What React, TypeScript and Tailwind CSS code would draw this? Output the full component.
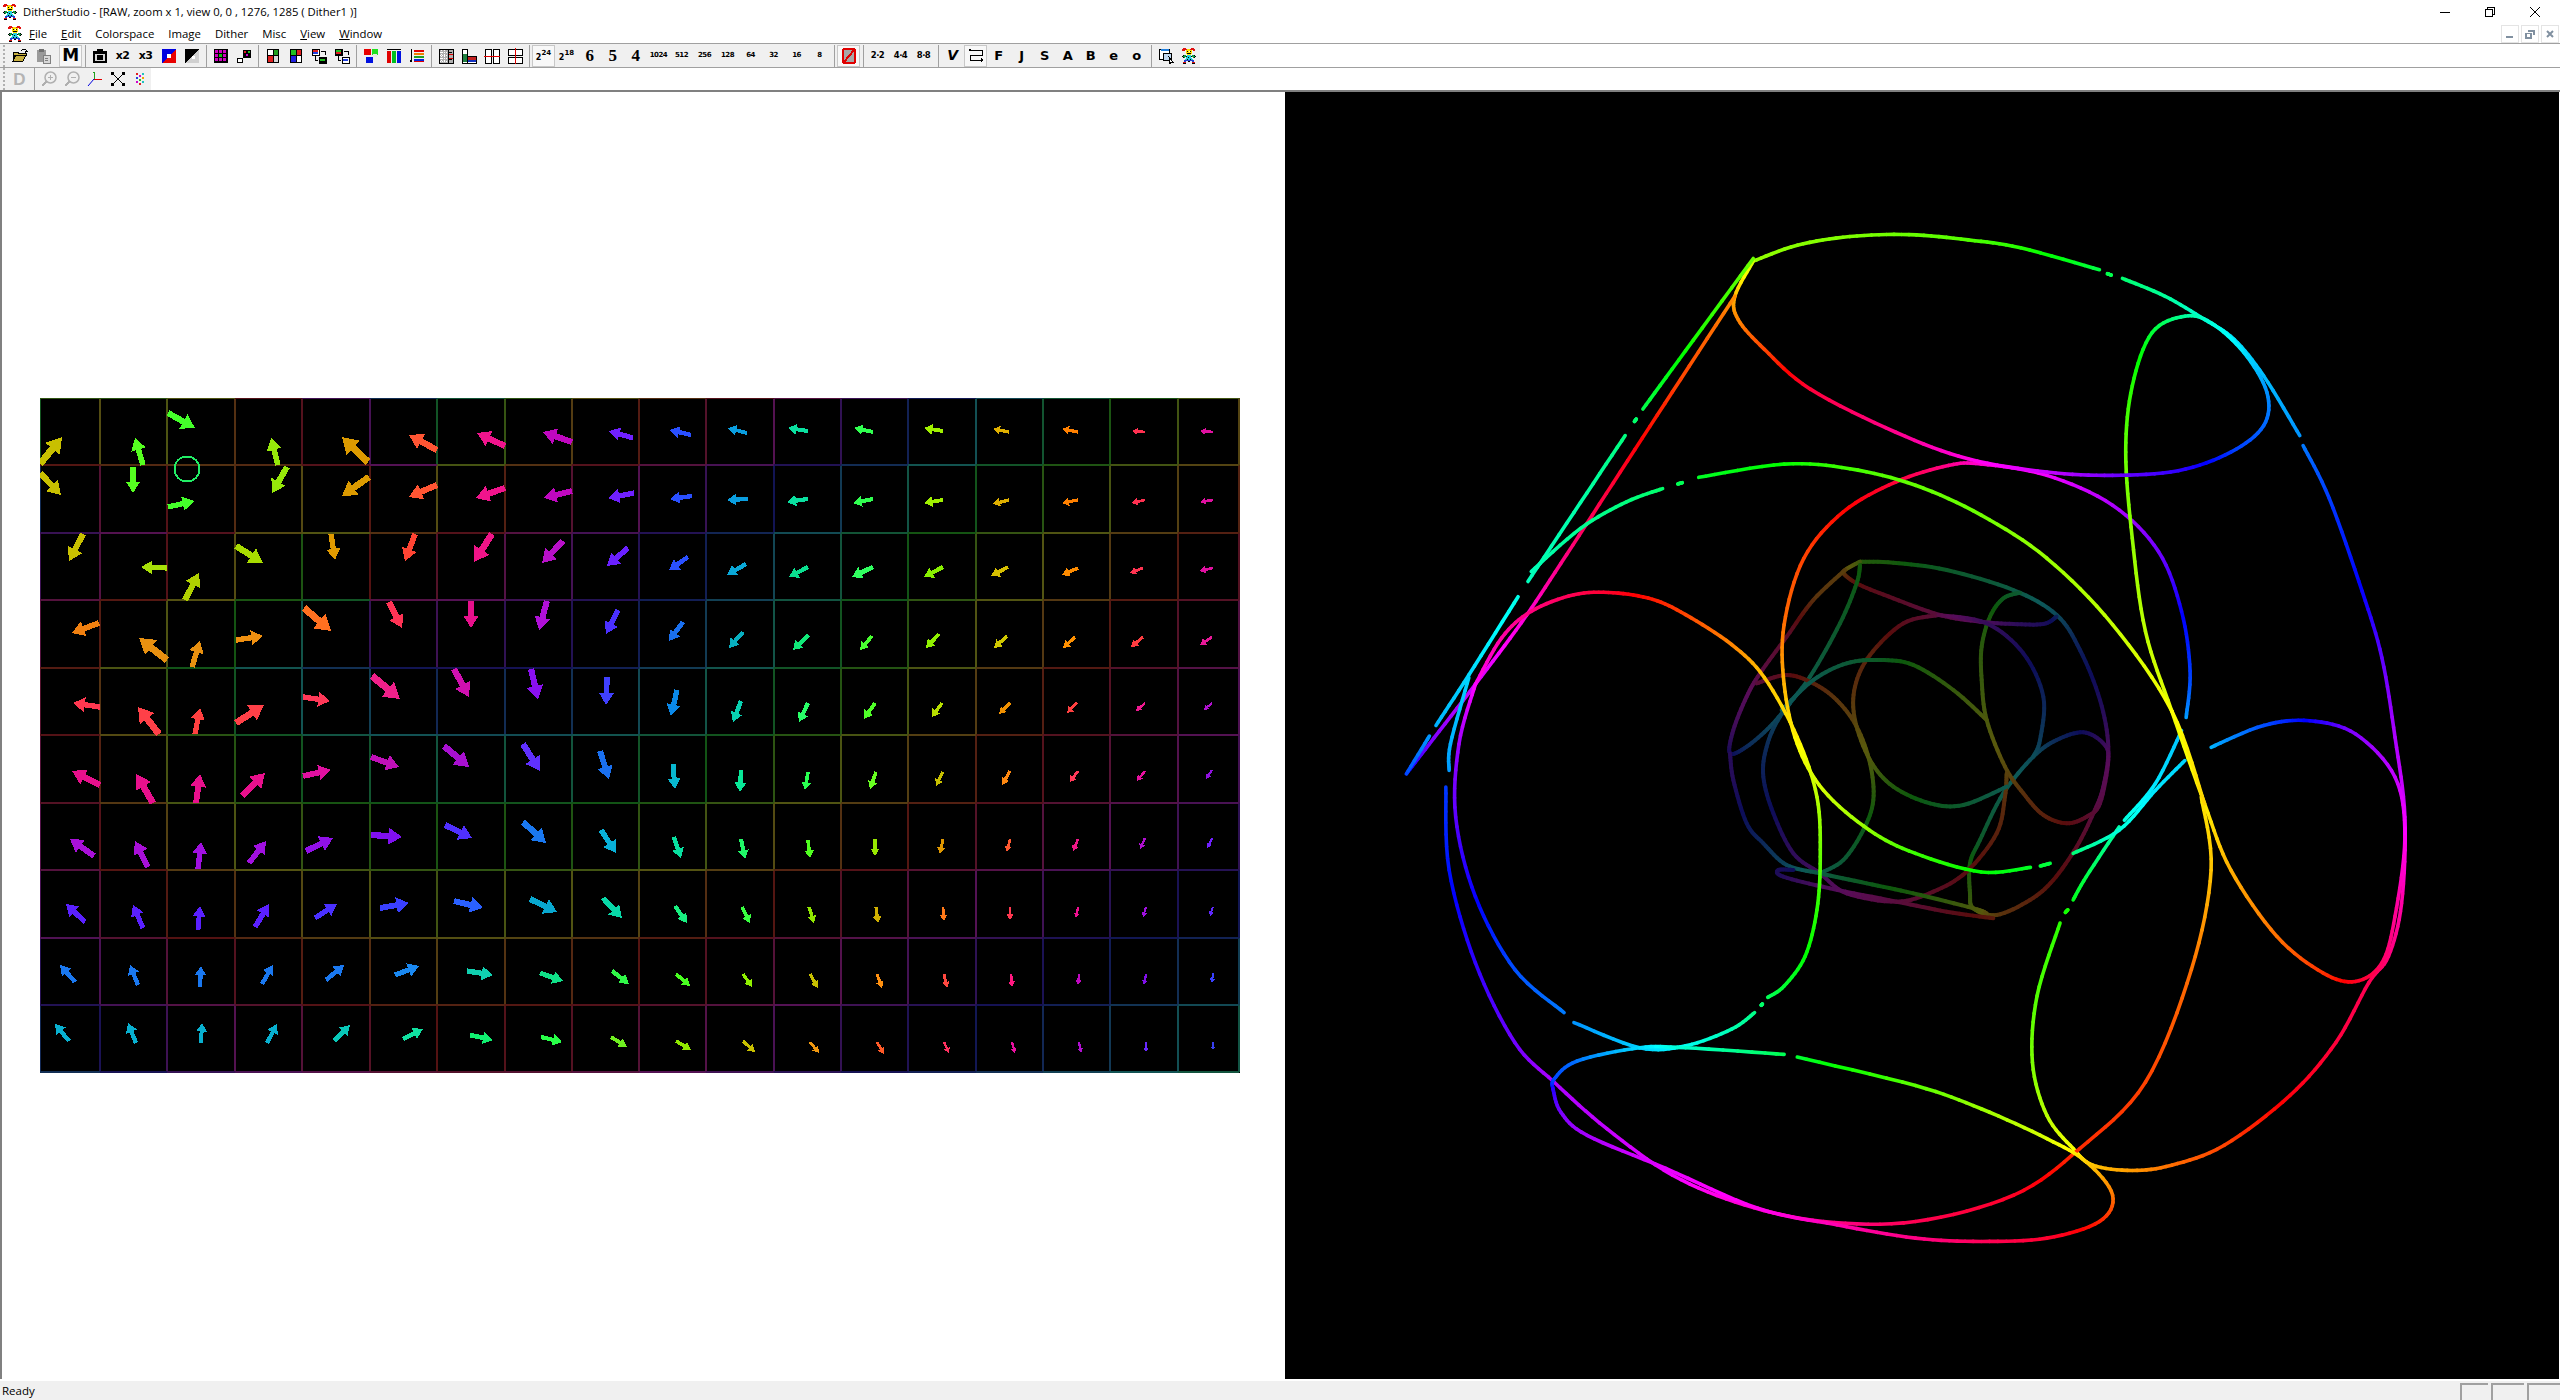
import React from 'react';

type Arrow = [number, number, number, number, string];
type Pt = [number, number, number];

const UI_FONT = { fontFamily: '"Open Sans", "Noto Sans", sans-serif' };

// ---------- arrow field ----------
const ARROWS: Arrow[] = [
  [40, 464, 62, 437, '#c8c000'], [143, 465, 135, 438, '#55ff20'], [168, 413, 195, 428, '#44ff2a'], [278, 465, 271, 438, '#96e80a'], [368, 462, 342, 437, '#dc9a00'], [437, 450, 409, 435, '#ff5533'],
  [505, 446, 477, 433, '#f0148c'], [572, 442, 543, 432, '#c008c0'], [633, 438, 609, 431, '#7020ff'], [691, 435, 670, 430, '#2a50ff'], [747, 433, 728, 428, '#0a9ee0'], [808, 431, 788, 428, '#0ae0a0'],
  [873, 432, 854, 428, '#30ff50'], [943, 431, 924, 428, '#a0f000'], [1009, 432, 993, 429, '#e0b000'], [1078, 432, 1062, 429, '#ff8000'], [1145, 432, 1132, 431, '#ff3050'], [1213, 432, 1200, 431, '#e010a0'],

  [40, 473, 61, 495, '#c8c000'], [133, 467, 133, 493, '#55ff20'], [168, 507, 194, 501, '#44ff2a'], [287, 467, 272, 493, '#96e80a'], [369, 477, 342, 496, '#dc9a00'], [437, 485, 409, 497, '#ff5533'],
  [505, 488, 476, 498, '#f0148c'], [572, 491, 544, 498, '#c008c0'], [634, 493, 608, 498, '#7020ff'], [692, 496, 670, 499, '#2a50ff'], [748, 499, 727, 500, '#0a9ee0'], [808, 499, 787, 502, '#0ae0a0'],
  [873, 499, 853, 503, '#30ff50'], [943, 500, 924, 503, '#a0f000'], [1009, 500, 993, 504, '#e0b000'], [1078, 500, 1062, 503, '#ff8000'], [1145, 500, 1132, 503, '#ff3050'], [1213, 500, 1200, 502, '#e010a0'],

  [83, 534, 69, 561, '#c8c000'], [167, 568, 141, 567, '#a8e008'], [185, 600, 199, 573, '#b0d000'], [236, 546, 263, 563, '#a8dc00'], [331, 534, 335, 560, '#e09a00'], [415, 534, 405, 561, '#ff4433'],
  [492, 534, 474, 562, '#f01488'], [563, 541, 542, 563, '#b810c8'], [628, 548, 607, 566, '#6a20ff'], [688, 557, 669, 570, '#2a50ff'], [746, 564, 727, 575, '#0aa8d8'], [808, 567, 789, 577, '#0ae090'],
  [873, 567, 852, 577, '#30ff60'], [943, 567, 924, 577, '#88f000'], [1008, 567, 991, 576, '#d8c000'], [1078, 568, 1062, 575, '#ff8c00'], [1143, 568, 1130, 573, '#ff3350'], [1213, 568, 1200, 571, '#e010a0'],

  [99, 623, 72, 633, '#f08010'], [167, 660, 139, 638, '#e89010'], [192, 667, 200, 641, '#e89010'], [236, 640, 263, 636, '#f09010'], [304, 608, 331, 631, '#ff7020'], [389, 602, 402, 628, '#ff3355'],
  [471, 601, 471, 628, '#e8108c'], [547, 601, 539, 630, '#b010d8'], [618, 610, 606, 634, '#4a30ff'], [683, 622, 669, 641, '#1a70f0'], [743, 632, 729, 648, '#08b0c0'], [808, 635, 793, 650, '#10e878'],
  [872, 636, 860, 650, '#48ff30'], [939, 634, 926, 648, '#90f000'], [1007, 636, 994, 648, '#d0c800'], [1075, 637, 1063, 648, '#ff9000'], [1143, 637, 1131, 647, '#ff3c40'], [1212, 637, 1200, 645, '#e81898'],

  [100, 707, 73, 703, '#ff3850'], [159, 734, 138, 707, '#ff4048'], [195, 734, 200, 708, '#ff4040'], [236, 723, 264, 705, '#ff4048'], [303, 697, 330, 701, '#ff3858'], [372, 676, 400, 699, '#f0208a'],
  [454, 669, 469, 697, '#d010b0'], [531, 669, 538, 699, '#8a10f0'], [607, 677, 606, 705, '#4040ff'], [677, 690, 671, 716, '#0a88e8'], [741, 701, 733, 722, '#08d0b0'], [808, 703, 799, 722, '#28ff68'],
  [875, 703, 864, 719, '#50ff28'], [942, 703, 932, 717, '#b8e000'], [1010, 703, 999, 714, '#f09000'], [1077, 703, 1067, 713, '#ff4040'], [1145, 703, 1136, 711, '#f01890'], [1212, 703, 1204, 710, '#b010d0'],

  [100, 785, 72, 771, '#e8108c'], [153, 803, 136, 774, '#e8108c'], [196, 803, 200, 774, '#e8108c'], [242, 796, 265, 773, '#e8108c'], [303, 776, 331, 770, '#e010a0'], [371, 757, 399, 767, '#c010b8'],
  [444, 746, 469, 767, '#a810d0'], [523, 744, 540, 771, '#6030ff'], [600, 751, 609, 779, '#1a70f0'], [673, 764, 675, 789, '#08b8d0'], [741, 770, 740, 792, '#08e898'], [808, 772, 805, 790, '#28ff50'],
  [876, 772, 870, 789, '#68ff20'], [943, 772, 936, 786, '#c8c000'], [1010, 771, 1002, 785, '#ff8810'], [1078, 771, 1070, 782, '#ff3858'], [1145, 771, 1137, 781, '#e810a0'], [1212, 770, 1206, 779, '#9010e0'],

  [94, 856, 70, 839, '#a810d8'], [148, 867, 135, 841, '#a810d8'], [198, 869, 201, 842, '#a010e0'], [249, 863, 266, 841, '#a010e0'], [306, 851, 333, 838, '#9010e8'], [371, 835, 402, 837, '#8010f0'],
  [445, 825, 472, 838, '#5030ff'], [523, 822, 546, 843, '#1a78f0'], [601, 830, 616, 853, '#08b0d8'], [674, 837, 681, 858, '#08e0a0'], [741, 839, 745, 859, '#20f868'], [808, 840, 810, 858, '#50ff20'],
  [875, 839, 875, 856, '#98e800'], [943, 839, 940, 854, '#e09800'], [1010, 839, 1007, 852, '#ff5830'], [1078, 839, 1073, 851, '#f01888'], [1145, 838, 1140, 849, '#b010d0'], [1212, 838, 1207, 848, '#7020ff'],

  [85, 922, 66, 904, '#5a20ff'], [143, 928, 133, 905, '#5a20ff'], [198, 930, 200, 906, '#5a20ff'], [255, 927, 269, 904, '#5a20ff'], [315, 918, 337, 904, '#4a30ff'], [380, 908, 409, 903, '#3a40ff'],
  [454, 901, 483, 908, '#2a60ff'], [530, 899, 557, 912, '#08a8d0'], [603, 898, 622, 918, '#08d8a8'], [675, 906, 687, 923, '#18f080'], [742, 907, 750, 923, '#38ff40'], [809, 907, 814, 923, '#90e800'],
  [876, 907, 878, 923, '#d0b000'], [943, 907, 944, 921, '#ff7818'], [1010, 907, 1010, 920, '#ff3850'], [1078, 907, 1076, 918, '#f01090'], [1146, 907, 1143, 917, '#a010e0'], [1213, 907, 1210, 916, '#6028ff'],

  [75, 982, 60, 965, '#1a78f0'], [138, 985, 130, 965, '#1a78f0'], [200, 987, 201, 966, '#1a78f0'], [262, 984, 273, 965, '#1a78f0'], [326, 980, 344, 965, '#1a78f0'], [395, 975, 419, 966, '#1a88f0'],
  [467, 971, 493, 975, '#10d0b0'], [540, 973, 563, 981, '#10e088'], [612, 971, 629, 984, '#30f848'], [676, 974, 690, 986, '#48ff20'], [743, 974, 752, 987, '#90f000'], [810, 974, 818, 988, '#c8c000'],
  [877, 974, 882, 988, '#ff9010'], [944, 974, 947, 988, '#ff4840'], [1011, 974, 1012, 987, '#ff1880'], [1079, 974, 1078, 985, '#c008c0'], [1146, 974, 1144, 985, '#8010e8'], [1213, 973, 1212, 983, '#3840ff'],

  [69, 1041, 55, 1024, '#08b0d0'], [136, 1043, 128, 1023, '#08b0d0'], [201, 1043, 202, 1023, '#08b0d0'], [267, 1043, 277, 1024, '#08b0d0'], [334, 1041, 350, 1025, '#08c8b8'], [403, 1039, 423, 1029, '#10e0a0'],
  [470, 1035, 493, 1040, '#10f070'], [541, 1037, 562, 1042, '#28ff48'], [611, 1037, 627, 1047, '#70f020'], [676, 1041, 691, 1050, '#90e800'], [743, 1041, 755, 1052, '#c8c000'], [810, 1042, 819, 1053, '#f09810'],
  [877, 1042, 884, 1054, '#ff5a28'], [944, 1042, 949, 1053, '#ff3060'], [1012, 1042, 1015, 1053, '#e810a0'], [1079, 1042, 1081, 1053, '#b010d0'], [1146, 1042, 1146, 1052, '#6828ff'], [1213, 1042, 1213, 1050, '#3840f0'],
];

const GRID_XS = [40, 100, 167, 235, 302, 370, 437, 505, 572, 639, 706, 774, 841, 908, 976, 1043, 1110, 1178, 1239];
const GRID_YS = [398, 465, 533, 600, 668, 735, 803, 870, 938, 1005, 1072];

// rough hue of the grid lines, sampled on a coarse lattice
const HUE_XS = [40, 167, 302, 437, 572, 707, 842, 977, 1113, 1240];
const HUE_YS = [398, 533, 668, 803, 938, 1005, 1073];
const HUES = [
  [90, 100, 320, 180, 70, 10, 300, 210, 130, 60],
  [260, 320, 80, 10, 300, 240, 170, 100, 50, 0],
  [340, 100, 200, 250, 240, 190, 120, 50, 350, 300],
  [320, 60, 110, 130, 130, 100, 50, 0, 320, 280],
  [280, 350, 30, 60, 40, 0, 320, 280, 240, 220],
  [240, 300, 350, 20, 0, 330, 290, 250, 220, 180],
  [200, 260, 300, 340, 330, 290, 250, 220, 190, 150],
];

function lerpHue(a: number, b: number, t: number) {
  const d = ((b - a + 540) % 360) - 180;
  return (a + d * t + 360) % 360;
}

function slot(list: number[], v: number) {
  let i = 0;
  while (i < list.length - 2 && v > list[i + 1]) i++;
  return [i, Math.min(1, Math.max(0, (v - list[i]) / (list[i + 1] - list[i])))];
}

function gridHue(x: number, y: number) {
  const [i, tx] = slot(HUE_XS, x);
  const [j, ty] = slot(HUE_YS, y);
  return lerpHue(lerpHue(HUES[j][i], HUES[j][i + 1], tx), lerpHue(HUES[j + 1][i], HUES[j + 1][i + 1], tx), ty);
}

function arrowPoints([x1, y1, x2, y2]: Arrow) {
  const dx = x2 - x1;
  const dy = y2 - y1;
  const len = Math.hypot(dx, dy);
  const ux = dx / len;
  const uy = dy / len;
  const head = len * 0.43;
  const hw = len * 0.27;
  const sw = Math.max(0.7, len * 0.1);
  const nx = x2 - ux * head;
  const ny = y2 - uy * head;
  const p = (x: number, y: number, w: number) => `${(x - uy * w).toFixed(1)},${(y + ux * w).toFixed(1)}`;
  return [p(x1, y1, sw), p(nx, ny, sw), p(nx, ny, hw), p(x2, y2, 0), p(nx, ny, -hw), p(nx, ny, -sw), p(x1, y1, -sw)].join(' ');
}

function ArrowField() {
  const lines: React.ReactNode[] = [];
  GRID_XS.forEach((x, i) => {
    for (let j = 0; j < GRID_YS.length - 1; j++) {
      const h = gridHue(x, (GRID_YS[j] + GRID_YS[j + 1]) / 2);
      lines.push(<line key={`v${i}-${j}`} x1={x} x2={x} y1={GRID_YS[j]} y2={GRID_YS[j + 1]} stroke={`hsl(${h} 65% 20%)`} strokeWidth={2} />);
    }
  });
  GRID_YS.forEach((y, j) => {
    for (let i = 0; i < GRID_XS.length - 1; i++) {
      const h = gridHue((GRID_XS[i] + GRID_XS[i + 1]) / 2, y);
      lines.push(<line key={`h${i}-${j}`} x1={GRID_XS[i]} x2={GRID_XS[i + 1]} y1={y} y2={y} stroke={`hsl(${h} 65% 20%)`} strokeWidth={2} />);
    }
  });
  return (
    <svg width={1200} height={675} viewBox="40 398 1200 675" shapeRendering="crispEdges" className="block bg-black">
      {lines}
      {ARROWS.map((a, i) => (
        <polygon key={i} points={arrowPoints(a)} fill={a[4]} />
      ))}
      <circle cx={187} cy={469} r={12.5} fill="none" stroke="#22ee66" strokeWidth={2} />
    </svg>
  );
}

// ---------- curve ----------
const OUTER: Pt[][] = [
  [[553, 62, 85], [620, 38, 88], [700, 25, 90], [790, 22, 95], [880, 30, 100], [960, 42, 110], [1080, 75, 135]],
  [[1092, 81, 138], [1098, 83, 138]],
  [[1115, 88, 145], [1180, 115, 155], [1240, 150, 170], [1285, 180, 185], [1330, 235, 195], [1385, 325, 205]],
  [[1390, 340, 210], [1430, 420, 225], [1480, 560, 240], [1510, 660, 260], [1530, 780, 280], [1545, 900, 290], [1540, 1030, 320], [1520, 1110, 330], [1490, 1150, 340], [1440, 1240, 345], [1370, 1320, 355], [1270, 1395, 15], [1190, 1425, 25], [1130, 1433, 35], [1070, 1425, 45], [1040, 1400, 60], [1000, 1350, 75], [978, 1270, 90], [985, 1170, 100], [1020, 1060, 110]],
  [[1028, 1044, 115], [1032, 1040, 115]],
  [[1040, 1025, 125], [1060, 990, 135], [1110, 915, 160]],
  [[1118, 905, 170], [1165, 850, 185], [1205, 770, 195]],
  [[1212, 750, 200], [1218, 680, 225], [1205, 590, 240], [1170, 500, 265], [1100, 430, 280], [1000, 385, 295], [900, 368, 310], [850, 370, 325], [770, 395, 345], [690, 440, 0], [630, 510, 15], [600, 610, 25], [600, 700, 40], [620, 790, 60], [660, 860, 70], [730, 920, 85], [800, 955, 105], [900, 983, 120], [975, 976, 128]],
  [[990, 974, 132], [1005, 970, 135]],
  [[1040, 955, 145], [1110, 920, 170], [1165, 860, 185], [1210, 815, 190]],
  [[1250, 795, 195], [1330, 762, 220], [1400, 755, 240], [1470, 775, 270], [1530, 840, 285], [1545, 930, 300], [1530, 1050, 325], [1510, 1120, 335], [1470, 1148, 350], [1420, 1135, 10], [1350, 1080, 25], [1280, 980, 40], [1240, 880, 55], [1190, 740, 65], [1150, 620, 75], [1130, 480, 85], [1120, 350, 95], [1130, 250, 110], [1160, 170, 130], [1210, 145, 155], [1250, 155, 170], [1300, 200, 185], [1335, 260, 205], [1330, 310, 215], [1280, 350, 225], [1200, 378, 250], [1100, 385, 265], [1000, 380, 285], [880, 360, 305], [770, 320, 325], [640, 255, 345], [570, 195, 15], [530, 150, 30], [525, 115, 40], [553, 62, 70]],
  [[525, 115, 35], [430, 259, 15], [340, 396, 350], [260, 518, 330], [200, 607, 310], [130, 700, 290], [60, 790, 270], [25, 835, 240]],
  [[25, 835, 225], [60, 778, 205]],
  [[70, 762, 200], [120, 686, 190], [195, 568, 175]],
  [[210, 545, 165], [290, 426, 160], [358, 325, 150]],
  [[372, 304, 145], [375, 300, 145]],
  [[385, 285, 140], [450, 197, 120], [553, 58, 95]],
  [[130, 700, 300], [170, 630, 320], [215, 590, 330], [280, 565, 340], [340, 562, 350], [400, 572, 5], [450, 595, 15], [520, 640, 30], [570, 690, 45], [620, 780, 55], [650, 870, 75], [655, 960, 95], [650, 1040, 110], [632, 1110, 120], [600, 1155, 130], [575, 1172, 140]],
  [[567, 1182, 145], [565, 1184, 145]],
  [[555, 1195, 150], [520, 1220, 160], [450, 1245, 175], [380, 1248, 190], [280, 1210, 205]],
  [[265, 1195, 210], [190, 1130, 220], [130, 1020, 240], [100, 900, 260], [105, 790, 275], [130, 700, 300]],
  [[90, 830, 205], [92, 790, 200], [120, 690, 190]],
  [[85, 855, 225], [90, 980, 235], [130, 1120, 250], [190, 1240, 265], [250, 1300, 280], [330, 1370, 285], [430, 1440, 295], [540, 1485, 310], [660, 1510, 325], [800, 1510, 340], [950, 1470, 350], [1050, 1400, 10], [1150, 1300, 15], [1220, 1130, 25], [1250, 980, 45], [1235, 870, 55]],
  [[248, 1310, 250], [250, 1295, 225], [285, 1268, 215], [380, 1248, 190], [450, 1248, 170], [600, 1258, 140]],
  [[620, 1262, 135], [800, 1305, 100], [900, 1340, 85], [1000, 1385, 70], [1060, 1420, 50], [1100, 1470, 30], [1080, 1510, 10], [1000, 1535, 350], [900, 1540, 340], [800, 1535, 330], [680, 1515, 320], [560, 1490, 305], [420, 1430, 295], [300, 1380, 280], [260, 1345, 270], [248, 1310, 250]],
  [[215, 530, 165], [290, 465, 155], [360, 425, 150], [415, 405, 145]],
  [[438, 398, 140], [445, 396, 140]],
  [[470, 388, 130], [600, 368, 120], [700, 375, 105], [800, 400, 97], [900, 445, 95], [1000, 510, 85], [1100, 610, 75], [1190, 740, 62], [1240, 880, 50]],
];

const INNER: Pt[][] = [
  [[540, 125, 100], [640, 128, 110], [800, 150, 140], [1000, 210, 160], [1130, 285, 190], [1200, 390, 225], [1260, 540, 250], [1285, 680, 280], [1270, 800, 300], [1240, 880, 320], [1190, 980, 340], [1120, 1080, 0], [1050, 1140, 15], [950, 1185, 30], [880, 1165, 70], [870, 1120, 90], [870, 1030, 110], [900, 960, 140], [970, 820, 165], [1060, 710, 190], [1130, 660, 215], [1210, 637, 240], [1270, 670, 270], [1285, 720, 295], [1260, 850, 315], [1220, 890, 335], [1160, 910, 355], [1090, 885, 15], [1030, 820, 25], [975, 740, 45], [920, 600, 70], [905, 480, 85], [905, 380, 95], [930, 290, 110], [970, 235, 130], [1020, 218, 150]],
  [[1130, 290, 215], [1090, 312, 250], [1000, 312, 265], [900, 305, 290], [780, 285, 320], [640, 235, 340], [540, 195, 355], [495, 165, 20], [495, 150, 40], [540, 125, 80]],
  [[495, 150, 40], [400, 240, 30], [320, 350, 340], [240, 460, 320], [200, 530, 300], [160, 630, 280], [150, 700, 250], [200, 680, 220], [270, 620, 200], [330, 550, 185]],
  [[540, 135, 110], [530, 190, 125], [480, 310, 140], [390, 470, 160], [300, 590, 195], [260, 680, 215], [250, 770, 225], [280, 880, 240], [340, 1000, 265], [420, 1060, 280], [500, 1120, 300], [650, 1145, 320], [760, 1115, 340], [860, 1055, 355], [950, 940, 15], [975, 830, 25], [980, 760, 40]],
  [[150, 700, 260], [160, 780, 260], [200, 910, 235], [250, 970, 220], [320, 1035, 200], [420, 1060, 165], [560, 1090, 135], [700, 1120, 110], [880, 1165, 75], [920, 1180, 50]],
  [[230, 490, 320], [320, 465, 350], [400, 490, 15], [470, 540, 30], [530, 620, 40], [570, 730, 70], [580, 840, 100], [550, 930, 130], [490, 1020, 150], [420, 1060, 165]],
  [[775, 285, 320], [670, 310, 345], [570, 405, 15], [525, 500, 25], [525, 600, 40], [570, 720, 65], [640, 800, 100], [750, 850, 130], [850, 855, 145], [980, 800, 170]],
  [[775, 285, 320], [920, 310, 275], [1030, 400, 250], [1090, 530, 225], [1080, 660, 205], [1060, 710, 190]],
  [[305, 570, 185], [400, 480, 170], [500, 430, 155], [600, 420, 140], [700, 435, 115], [820, 510, 90], [920, 600, 70]],
  [[340, 1050, 240], [295, 1050, 250], [310, 1070, 255], [450, 1105, 290], [650, 1145, 320], [800, 1175, 345], [940, 1195, 10]],
];

function smooth(pts: Pt[]) {
  const out: Pt[] = [];
  for (let i = 0; i < pts.length - 1; i++) {
    const p0 = pts[Math.max(0, i - 1)];
    const p1 = pts[i];
    const p2 = pts[i + 1];
    const p3 = pts[Math.min(pts.length - 1, i + 2)];
    for (let s = 0; s < 8; s++) {
      const t = s / 8;
      const cr = (a: number, b: number, c: number, d: number) =>
        0.5 * (2 * b + (c - a) * t + (2 * a - 5 * b + 4 * c - d) * t * t + (3 * b - a - 3 * c + d) * t * t * t);
      out.push([cr(p0[0], p1[0], p2[0], p3[0]), cr(p0[1], p1[1], p2[1], p3[1]), lerpHue(p1[2], p2[2], t)]);
    }
  }
  out.push(pts[pts.length - 1]);
  return out;
}

function CurveSet({ traces, sx, sy, ox, oy, width, light, sat }: { traces: Pt[][]; sx: number; sy: number; ox: number; oy: number; width: number; light: number; sat: number }) {
  return (
    <g strokeWidth={width} strokeLinecap="round">
      {traces.map((tr, i) => {
        const pts = smooth(tr);
        return pts.slice(1).map((p, k) => (
          <line
            key={`${i}-${k}`}
            x1={ox + pts[k][0] * sx}
            y1={oy + pts[k][1] * sy}
            x2={ox + p[0] * sx}
            y2={oy + p[1] * sy}
            stroke={`hsl(${p[2]} ${sat}% ${light}%)`}
          />
        ));
      })}
    </g>
  );
}

function Knot() {
  return (
    <svg viewBox="1285 92 1274 1287" className="block w-full h-full">
      <CurveSet traces={INNER} sx={1 / 3} sy={1 / 3} ox={1680} oy={520} width={4} light={20} sat={75} />
      <CurveSet traces={OUTER} sx={1030 / 1568} sy={1040 / 1568} ox={1390} oy={220} width={3.6} light={50} sat={100} />
    </svg>
  );
}

// ---------- pixel logo ----------
const LOGO_COLORS: Record<string, string> = { r: '#e01010', y: '#ffe000', k: '#000000', c: '#20d0e0', g: '#10a040', b: '#2040d0' };
const LOGO = [
  '..rrr.....rrr...',
  '.rrrrryyyrrrrr..',
  '.rrr.yyyyyy.rr..',
  '.....yky.ky.....',
  '.....yyyyyy.....',
  '.....ykkkky.....',
  '......yyyy......',
  '..kgg.cccc.ggk..',
  '.kgggkcccckgggk.',
  '..kg.cckcc..gk..',
  '.....cccccc.....',
  '....cckcckcc....',
  '...bbbbbbbbbb...',
  '...bb..kk..bb...',
  '..rrr......rrr..',
  '..kkk......kkk..',
];

function Logo() {
  return (
    <svg width={16} height={16} viewBox="0 0 16 16" shapeRendering="crispEdges">
      {LOGO.map((row, y) =>
        row.split('').map((c, x) => (c === '.' ? null : <rect key={`${x}-${y}`} x={x} y={y} width={1} height={1} fill={LOGO_COLORS[c]} />)),
      )}
    </svg>
  );
}

// ---------- toolbar icons ----------
function Ico({ children, size = 16 }: { children: React.ReactNode; size?: number }) {
  return (
    <svg width={size} height={size} viewBox="0 0 16 16" shapeRendering="crispEdges">
      {children}
    </svg>
  );
}

const Open = () => (
  <Ico>
    <path d="M1 4h5v1h8v2h-2L9 7 3 7 1 13z M1 13h10l3-6H4z" fill="#c8b040" stroke="#000" strokeWidth={1} />
    <path d="M9 3l2-2h2l2 2-2 0v2" fill="none" stroke="#000" />
  </Ico>
);
const Paste = () => (
  <Ico>
    <rect x={2} y={2} width={9} height={12} fill="#9a9a9a" />
    <rect x={4} y={1} width={5} height={3} fill="#707070" />
    <rect x={8} y={7} width={7} height={8} fill="#d8d8d8" stroke="#808080" />
    <path d="M10 10h3M10 12h3" stroke="#808080" />
  </Ico>
);
const Camera = () => (
  <Ico>
    <rect x={5} y={1} width={6} height={2} fill="#000" />
    <rect x={1} y={3} width={14} height={12} fill="#000" />
    <rect x={3} y={6} width={10} height={7} fill="#d8d8d8" />
    <rect x={5} y={7} width={6} height={5} fill="#000" />
  </Ico>
);
const BlueRed = () => (
  <Ico>
    <rect x={1} y={1} width={14} height={14} fill="#e80000" />
    <path d="M1 1h14L1 15z" fill="#0000e0" />
    <path d="M6 6h4v4H6z" fill="#fff" />
  </Ico>
);
const BlackWhite = () => (
  <Ico>
    <rect x={1} y={1} width={14} height={14} fill="#d0d0d0" />
    <path d="M1 1h14L1 15z" fill="#000" />
    <path d="M8 8h3v3H8z" fill="#fff" />
  </Ico>
);
const Check = () => (
  <Ico>
    <rect x={1} y={1} width={14} height={14} fill="#000" />
    {[2, 6, 10].map((x) =>
      [2, 6, 10].map((y) => <rect key={`${x}${y}`} x={x} y={y} width={3} height={3} fill={(x + y) % 8 === 0 ? '#d000c0' : x === 6 ? '#10c010' : '#d000c0'} />),
    )}
  </Ico>
);
const GridArrow = () => (
  <Ico>
    <rect x={7} y={2} width={8} height={8} fill="#000" />
    <rect x={8} y={3} width={2} height={2} fill="#e02020" />
    <rect x={12} y={3} width={2} height={2} fill="#20c020" />
    <rect x={10} y={6} width={2} height={2} fill="#d000d0" />
    <path d="M7 11.5H3.5v3M1 11.5h5" fill="none" stroke="#000" />
    <rect x={1} y={10} width={5} height={4} fill="#fff" stroke="#000" />
  </Ico>
);
const SGrid = ({ flip }: { flip?: boolean }) => (
  <Ico>
    <rect x={2} y={1} width={12} height={14} fill="#000" />
    <rect x={3} y={2} width={5} height={5} fill={flip ? '#20c020' : '#fff'} />
    <rect x={9} y={2} width={4} height={5} fill={flip ? '#e02020' : '#20a020'} />
    <rect x={3} y={8} width={5} height={6} fill={flip ? '#2020e0' : '#e02020'} />
    <rect x={9} y={8} width={4} height={6} fill={flip ? '#fff' : '#d8d8d8'} />
  </Ico>
);
const Swap = ({ flip }: { flip?: boolean }) => (
  <Ico>
    <rect x={1} y={1} width={7} height={6} fill={flip ? '#000' : '#fff'} stroke="#000" />
    <rect x={2} y={2} width={5} height={2} fill={flip ? '#20c020' : '#e02020'} />
    <rect x={2} y={4} width={5} height={2} fill={flip ? '#e02020' : '#2040e0'} />
    <rect x={8} y={9} width={7} height={6} fill={flip ? '#fff' : '#000'} stroke="#000" />
    <rect x={9} y={11} width={5} height={2} fill={flip ? '#2040e0' : '#20c020'} />
    <path d="M10 3h4v4M4 8v4h3" fill="none" stroke="#000" />
  </Ico>
);
const Rgb = () => (
  <Ico>
    <rect x={1} y={1} width={7} height={6} fill="#e80000" />
    <rect x={9} y={1} width={6} height={6} fill="#20e020" />
    <rect x={3} y={9} width={7} height={6} fill="#0010e0" />
    <rect x={10} y={6} width={4} height={3} fill="#e8e8e8" />
  </Ico>
);
const Bars = () => (
  <Ico>
    <path d="M1 1h14" stroke="#000" />
    <rect x={1} y={3} width={4} height={12} fill="#e00000" />
    <rect x={6} y={3} width={4} height={12} fill="#00c020" />
    <rect x={11} y={3} width={4} height={12} fill="#0010e0" />
  </Ico>
);
const Stripes = () => (
  <Ico>
    <path d="M2 1v13M1 12l1 2 1-2" fill="none" stroke="#000" />
    <rect x={5} y={2} width={10} height={2} fill="#e00000" />
    <rect x={5} y={5} width={10} height={2} fill="#f08000" />
    <rect x={5} y={8} width={10} height={2} fill="#20a020" />
    <rect x={5} y={11} width={10} height={2} fill="#0020e0" />
    <rect x={5} y={13} width={10} height={1} fill="#e00000" />
  </Ico>
);
const Dots = () => (
  <Ico>
    <rect x={1} y={1} width={14} height={14} fill="#b0b0b0" stroke="#000" />
    <path d="M2 4h7M2 7h7M2 10h7M2 13h7M3 2v12M6 2v12" stroke="#fff" strokeDasharray="1 1" />
    <path d="M10 1v14M10 4h4M10 11h4" stroke="#000" />
    <path d="M11 6h4M11 10h4" stroke="#e00000" />
  </Ico>
);
const LBox = () => (
  <Ico>
    <rect x={1} y={1} width={5} height={14} fill="#fff" stroke="#000" />
    <rect x={2} y={6} width={4} height={8} fill="#208040" />
    <rect x={6} y={8} width={9} height={7} fill="#fff" stroke="#000" />
    <rect x={7} y={9} width={8} height={5} fill="#c02020" />
    <rect x={7} y={12} width={8} height={2} fill="#1030c0" />
  </Ico>
);
const SplitV = () => (
  <Ico>
    <rect x={1} y={1} width={6} height={14} fill="#fff" stroke="#000" />
    <rect x={9} y={1} width={6} height={14} fill="#fff" stroke="#000" />
    <path d="M0 8h16" stroke="#e00000" />
  </Ico>
);
const SplitH = () => (
  <Ico>
    <rect x={1} y={1} width={14} height={6} fill="#fff" stroke="#000" />
    <rect x={1} y={9} width={14} height={6} fill="#fff" stroke="#000" />
    <path d="M8 0v16" stroke="#e00000" />
  </Ico>
);
const NoEntry = () => (
  <Ico>
    <rect x={1} y={0} width={14} height={16} rx={3} fill="#e00000" />
    <rect x={3} y={2} width={10} height={12} fill="#a8a8a8" />
    <path d="M13 2L3 14" stroke="#e00000" strokeWidth={2} />
  </Ico>
);
const Loop = () => (
  <Ico>
    <path d="M2 2h12v5H2v5h12" fill="none" stroke="#000" strokeWidth={1} />
    <rect x={1} y={1} width={2} height={2} fill="#000" />
    <path d="M13 10l3 2-3 2z" fill="#000" />
  </Ico>
);
const Pick = () => (
  <Ico>
    <rect x={1} y={1} width={10} height={10} fill="#fff" stroke="#000" />
    <rect x={3} y={1} width={8} height={2} fill="#2080e0" />
    <rect x={5} y={5} width={8} height={7} fill="#c0d8f0" stroke="#000" />
    <path d="M11 9l4 5-2 0-1 2z" fill="#fff" stroke="#000" />
  </Ico>
);
const DChar = () => <span className="text-[#b4b4b4] font-bold text-[17px] leading-none" style={{ fontFamily: '"Liberation Sans", sans-serif' }}>D</span>;
const Mag = ({ plus }: { plus?: boolean }) => (
  <Ico>
    <circle cx={9.5} cy={6.5} r={5.5} fill="none" stroke="#b0b0b0" strokeWidth={1.5} shapeRendering="auto" />
    <path d="M5 11l-4 4" stroke="#b0b0b0" strokeWidth={2} />
    <path d="M7 6.5h5" stroke="#b0b0b0" />
    {plus && <path d="M9.5 4v5" stroke="#b0b0b0" />}
  </Ico>
);
const Axes = () => (
  <Ico>
    <path d="M7 8V1" stroke="#20a020" strokeWidth={1} />
    <path d="M7 8h8" stroke="#e00000" />
    <path d="M7 8l-6 7" stroke="#0000e0" shapeRendering="auto" />
    <path d="M6 2l1-2 1 2z" fill="#20a020" />
  </Ico>
);
const Cross = () => (
  <Ico>
    <path d="M2 2l12 12M14 2L2 14" stroke="#000" shapeRendering="auto" />
    <rect x={1} y={1} width={3} height={3} fill="#000" />
    <rect x={12} y={1} width={3} height={3} fill="#000" />
    <rect x={1} y={12} width={3} height={3} fill="#000" />
    <rect x={12} y={12} width={3} height={3} fill="#000" />
  </Ico>
);
const Speck = () => (
  <Ico>
    {[['#e02020', 3, 2], ['#20c0c0', 9, 2], ['#d000d0', 6, 4], ['#2040e0', 3, 6], ['#f0a000', 9, 6], ['#20c020', 6, 8], ['#d000d0', 3, 10], ['#20c0c0', 9, 10], ['#e02020', 6, 12]].map(([c, x, y], i) => (
      <rect key={i} x={x as number} y={y as number} width={2} height={2} fill={c as string} />
    ))}
  </Ico>
);

// ---------- toolbar bits ----------
function Btn({ children, pressed }: { children?: React.ReactNode; pressed?: boolean }) {
  return (
    <div className={`w-[23px] h-[22px] flex items-center justify-center shrink-0 ${pressed ? 'bg-[#f8f8f8] border border-[#c8c8c8]' : ''}`}>
      {children}
    </div>
  );
}

const Sep = () => (
  <div className="w-[6px] h-[22px] flex justify-center shrink-0">
    <div className="w-[1px] h-full bg-[#a0a0a0]" />
  </div>
);

const Grip = () => (
  <div className="w-[8px] h-[22px] shrink-0 flex justify-center">
    <div className="w-[2px] h-full border-l-2 border-dotted border-[#b0b0b0]" />
  </div>
);

function Glyph({ text, size, serif }: { text: string; size: number; serif?: boolean }) {
  return (
    <span
      className="font-bold text-black leading-none tracking-[-0.5px]"
      style={{ fontSize: size, fontFamily: serif ? '"Liberation Serif", serif' : '"DejaVu Sans", sans-serif' }}
    >
      {text}
    </span>
  );
}

function Pow({ a, b }: { a: string; b: string }) {
  return (
    <span className="font-bold text-black leading-none flex items-end" style={{ fontFamily: '"DejaVu Sans", sans-serif' }}>
      <span className="text-[8px] leading-[9px]">{a}</span>
      <span className="text-[7px] leading-[7px] mb-[5px]">{b}</span>
    </span>
  );
}

const MENUS: [string, boolean][] = [
  ['File', true],
  ['Edit', true],
  ['Colorspace', false],
  ['Image', false],
  ['Dither', false],
  ['Misc', false],
  ['View', true],
  ['Window', true],
];

export default function App() {
  return (
    <div className="w-[2560px] h-[1400px] flex flex-col bg-white overflow-hidden text-[12px] text-black" style={UI_FONT}>
      {/* title bar */}
      <div className="h-[24px] flex items-center shrink-0 pl-[2px]">
        <Logo />
        <span className="ml-[5px] text-[11.3px]">DitherStudio - [RAW, zoom x 1, view 0, 0 , 1276, 1285 ( Dither1 )]</span>
        <div className="ml-auto flex items-center">
          <div className="w-[45px] flex justify-center">
            <div className="w-[10px] h-[1px] bg-black" />
          </div>
          <div className="w-[45px] flex justify-center">
            <svg width={10} height={10} viewBox="0 0 10 10" fill="none" stroke="#000" shapeRendering="crispEdges">
              <path d="M.5 2.5h7v7h-7zM2.5 2.5v-2h7v7h-2" />
            </svg>
          </div>
          <div className="w-[45px] flex justify-center">
            <svg width={10} height={10} viewBox="0 0 10 10" stroke="#000">
              <path d="M0 0l10 10M10 0L0 10" />
            </svg>
          </div>
          <div className="w-[3px]" />
        </div>
      </div>
      {/* menu bar */}
      <div className="h-[19px] flex items-center shrink-0 pl-[7px]">
        <Logo />
        <div className="flex ml-[6px] gap-[14px]">
          {MENUS.map(([m, u]) => (
            <span key={m} className="text-[11.4px] leading-[16px]">
              {u ? <span className="underline">{m[0]}</span> : m[0]}
              {m.slice(1)}
            </span>
          ))}
        </div>
        <div className="ml-auto flex gap-[2px] mr-[1px]">
          {['min', 'max', 'close'].map((k) => (
            <div key={k} className="w-[18px] h-[18px] border border-[#e4e4e4] flex items-center justify-center">
              <svg width={10} height={10} viewBox="0 0 10 10" shapeRendering="crispEdges" fill="none" stroke="#8090a0" strokeWidth={2}>
                {k === 'min' && <path d="M1 8h7" />}
                {k === 'max' && <path d="M1 4.5h5v4.5H1zM3 2h6v4" strokeWidth={1.2} />}
                {k === 'close' && <path d="M2 2l6 6M8 2L2 8" shapeRendering="auto" />}
              </svg>
            </div>
          ))}
        </div>
      </div>
      {/* toolbars */}
      <div className="h-[25px] shrink-0 border-t border-b border-[#a0a0a0]">
        <div className="w-[1200px] h-full bg-[#f0f0f0] flex items-center">
          <Grip />
          <Btn><Open /></Btn>
          <Btn><Paste /></Btn>
          <div className="w-[5px] shrink-0" />
          <Btn pressed><Glyph text="M" size={17} /></Btn>
          <Sep />
          <Btn><Camera /></Btn>
          <Btn><Glyph text="x2" size={11} /></Btn>
          <Btn><Glyph text="x3" size={11} /></Btn>
          <Btn><BlueRed /></Btn>
          <Btn><BlackWhite /></Btn>
          <Sep />
          <Btn><Check /></Btn>
          <Btn><GridArrow /></Btn>
          <Sep />
          <Btn><SGrid /></Btn>
          <Btn><SGrid flip /></Btn>
          <Btn><Swap /></Btn>
          <Btn><Swap flip /></Btn>
          <Sep />
          <Btn><Rgb /></Btn>
          <Btn><Bars /></Btn>
          <Btn><Stripes /></Btn>
          <Sep />
          <Btn><Dots /></Btn>
          <Btn><LBox /></Btn>
          <Btn><SplitV /></Btn>
          <Btn><SplitH /></Btn>
          <Sep />
          <Btn pressed><Pow a="2" b="24" /></Btn>
          <Btn><Pow a="2" b="18" /></Btn>
          <Btn><Glyph text="6" size={17} serif /></Btn>
          <Btn><Glyph text="5" size={17} serif /></Btn>
          <Btn><Glyph text="4" size={17} serif /></Btn>
          {['1024', '512', '256', '128', '64', '32', '16', '8'].map((n) => (
            <Btn key={n}><Glyph text={n} size={7} /></Btn>
          ))}
          <Sep />
          <Btn pressed><NoEntry /></Btn>
          <Sep />
          <Btn><Glyph text="2·2" size={8.5} /></Btn>
          <Btn><Glyph text="4·4" size={8.5} /></Btn>
          <Btn><Glyph text="8·8" size={8.5} /></Btn>
          <Sep />
          <Btn><span className="italic"><Glyph text="V" size={14} /></span></Btn>
          <Btn pressed><Loop /></Btn>
          {['F', 'J', 'S', 'A', 'B', 'e', 'o'].map((g) => (
            <Btn key={g}><Glyph text={g} size={13} /></Btn>
          ))}
          <Sep />
          <Btn><Pick /></Btn>
          <Btn><Logo /></Btn>
        </div>
      </div>
      <div className="h-[24px] shrink-0 border-b-2 border-[#808080]">
        <div className="w-[151px] h-full bg-[#f0f0f0] flex items-center">
          <Grip />
          <Btn><DChar /></Btn>
          <Sep />
          <Btn><Mag plus /></Btn>
          <Btn><Mag /></Btn>
          <Btn><Axes /></Btn>
          <Btn><Cross /></Btn>
          <Btn><Speck /></Btn>
        </div>
      </div>
      {/* views */}
      <div className="h-[1287px] shrink-0 flex">
        <div className="w-[1285px] h-full border-l-2 border-[#808080] pl-[38px] pt-[306px] shrink-0">
          <ArrowField />
        </div>
        <div className="w-[1274px] h-full bg-black shrink-0">
          <Knot />
        </div>
      </div>
      {/* status bar */}
      <div className="mt-[2px] flex-1 bg-[#f0f0f0] flex items-center pl-[2px]">
        <span className="text-[11.5px]">Ready</span>
        <div className="ml-auto h-[17px] self-end flex gap-[3px]">
          <div className="w-[28px] border-t-2 border-l-2 border-[#a0a0a0]" />
          <div className="w-[33px] border-t-2 border-l-2 border-[#a0a0a0]" />
          <div className="w-[33px] border-t-2 border-l-2 border-[#a0a0a0]" />
        </div>
      </div>
    </div>
  );
}
